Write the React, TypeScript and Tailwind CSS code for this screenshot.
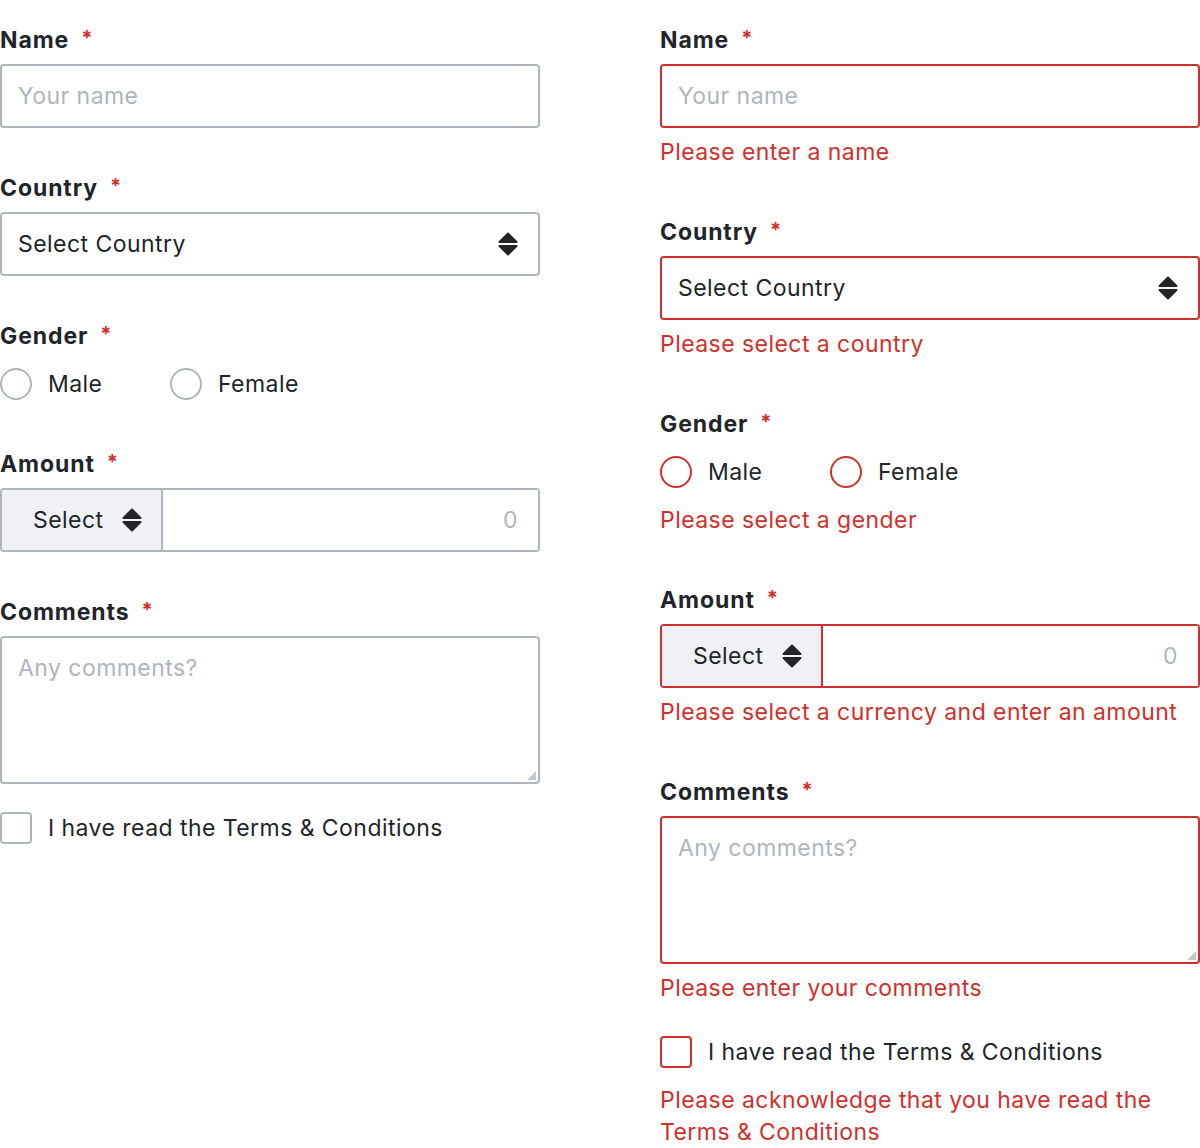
import React from 'react';

const RED = 'text-[#d0302c]';

function SortIcon() {
  return (
    <svg width="20" height="24" viewBox="0 0 20 24" className="shrink-0">
      <path
        d="M10 1.5 L18.5 10 L1.5 10 Z"
        fill="#212529"
        stroke="#212529"
        strokeWidth="2"
        strokeLinejoin="round"
      />
      <path
        d="M1.5 14 L18.5 14 L10 22.5 Z"
        fill="#212529"
        stroke="#212529"
        strokeWidth="2"
        strokeLinejoin="round"
      />
    </svg>
  );
}

function Label({ text, className = '' }: { text: string; className?: string }) {
  return (
    <div
      className={`flex h-8 items-start text-[23px] leading-8 font-bold tracking-[0.9px] text-[#212529] ${className}`}
    >
      {text}
      <span className={`ml-3 text-[20px] leading-7 ${RED}`}>*</span>
    </div>
  );
}

function ErrorText({ children, className = 'mt-2' }: { children: React.ReactNode; className?: string }) {
  return <p className={`text-[23px] leading-8 ${RED} ${className}`}>{children}</p>;
}

function Column({ invalid }: { invalid: boolean }) {
  const border = invalid ? 'border-[#d0302c]' : 'border-[#adb5bd]';
  const afterInput = invalid ? 'mt-12' : 'mt-[44px]';

  return (
    <div className="w-[540px] pt-6 tracking-[0.45px]">
      {/* Name */}
      <Label text="Name" />
      <input
        className={`mt-2 block h-16 w-full rounded border-2 ${border} bg-white px-4 text-[23px] tracking-[0.45px] text-[#212529] outline-none placeholder:text-[#adb5bd]`}
        placeholder="Your name"
      />
      {invalid && <ErrorText>Please enter a name</ErrorText>}

      {/* Country */}
      <Label text="Country" className={afterInput} />
      <div
        className={`mt-2 flex h-16 w-full items-center justify-between rounded border-2 ${border} bg-white pr-5 pl-4 text-[23px] text-[#212529]`}
      >
        <span>Select Country</span>
        <SortIcon />
      </div>
      {invalid && <ErrorText>Please select a country</ErrorText>}

      {/* Gender */}
      <Label text="Gender" className={afterInput} />
      <div className="mt-4 flex h-8 items-center text-[23px] text-[#212529]">
        <label className="flex w-[170px] items-center gap-4">
          <span className={`h-8 w-8 rounded-full border-2 ${border} bg-white`} />
          Male
        </label>
        <label className="flex items-center gap-4">
          <span className={`h-8 w-8 rounded-full border-2 ${border} bg-white`} />
          Female
        </label>
      </div>
      {invalid && <ErrorText className="mt-4">Please select a gender</ErrorText>}

      {/* Amount */}
      <Label text="Amount" className="mt-12" />
      <div className={`mt-2 flex h-16 w-full rounded border-2 ${border} bg-white`}>
        <div
          className={`flex w-[161px] items-center gap-[18px] rounded-l-[2px] border-r-2 ${border} bg-[#eff1f4] pl-[31px] text-[23px] text-[#212529]`}
        >
          Select
          <SortIcon />
        </div>
        <input
          className="min-w-0 flex-1 bg-white px-5 text-right text-[23px] text-[#212529] outline-none placeholder:text-[#adb5bd]"
          placeholder="0"
        />
      </div>
      {invalid && <ErrorText>Please select a currency and enter an amount</ErrorText>}

      {/* Comments */}
      <Label text="Comments" className={afterInput} />
      <div className="relative mt-2">
        <textarea
          className={`block h-[148px] w-full resize-none rounded border-2 ${border} bg-white px-4 py-[14px] text-[23px] leading-8 tracking-[0.45px] text-[#212529] outline-none placeholder:text-[#adb5bd]`}
          placeholder="Any comments?"
        />
        <svg className="absolute right-[4px] bottom-[4px]" width="9" height="9" viewBox="0 0 9 9">
          <path d="M9 0 L9 9 L0 9 Z" fill="#c4c8cd" />
        </svg>
      </div>
      {invalid && <ErrorText>Please enter your comments</ErrorText>}

      {/* Terms */}
      <label
        className={`flex h-8 items-center gap-4 text-[23px] leading-8 text-[#212529] ${invalid ? 'mt-8' : 'mt-7'}`}
      >
        <span className={`h-8 w-8 rounded border-2 ${border} bg-white`} />
        I have read the Terms &amp; Conditions
      </label>
      {invalid && (
        <ErrorText className="mt-4">
          Please acknowledge that you have read the Terms &amp; Conditions
        </ErrorText>
      )}
    </div>
  );
}

export default function App() {
  return (
    <div
      className="flex min-h-[1148px] w-[1200px] gap-[120px] bg-white"
      style={{ fontFamily: 'Inter, "Noto Sans", sans-serif' }}
    >
      <Column invalid={false} />
      <Column invalid />
    </div>
  );
}
